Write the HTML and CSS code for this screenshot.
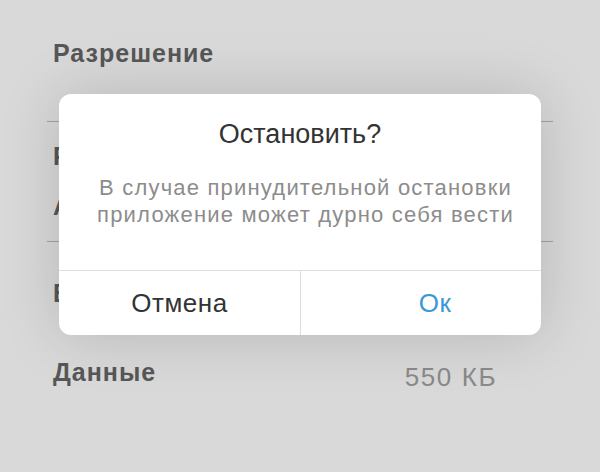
FILE: index.html
```html
<!DOCTYPE html>
<html lang="ru">
<head>
  <meta charset="UTF-8" />
  <meta name="viewport" content="width=device-width, initial-scale=1.0"/>
  <title>Остановить?</title>
  <link rel="stylesheet" href="styles.css">
</head>
<body>
  <div class="settings">
    <div class="row row-top">
      <span class="label">Разрешение</span>
    </div>

    <!-- these rows sit under the alert, only their first letters show -->
    <div class="group group-first">
      <div class="row">
        <span class="label">Расход</span>
      </div>
      <div class="row">
        <span class="label">А</span>
      </div>
    </div>

    <div class="group group-second">
      <div class="row row-tall">
        <span class="label">Всего</span>
      </div>
      <div class="row row-tall">
        <span class="label">Данные</span>
        <span class="value">550 КБ</span>
      </div>
    </div>
  </div>

  <!-- Alert dialog -->
  <div class="alert">
    <div class="alert-body">
      <h2 class="alert-title">Остановить?</h2>
      <p class="alert-text">В случае принудительной остановки<br>приложение может дурно себя вести</p>
    </div>
    <div class="alert-actions">
      <button type="button" class="alert-btn">Отмена</button>
      <button type="button" class="alert-btn alert-btn-ok">Ок</button>
    </div>
  </div>
</body>
</html>
```

FILE: styles.css
```css
:root {
  --bg: #d9d9d9;
  --text-dark: #575757;
  --text-muted: #8a8a8a;
  --line: #a3a3a3;
  --alert-bg: #ffffff;
  --alert-line: #dedede;
  --alert-title: #333333;
  --alert-text: #8c8c8c;
  --accent: #3a98d6;
  --radius: 12px;
}

* {
  box-sizing: border-box;
  margin: 0;
  padding: 0;
}

body {
  font-family: 'Liberation Sans', Arial, sans-serif;
  background: var(--bg);
  width: 600px;
  height: 472px;
  overflow: hidden;
  position: relative;
}

.settings {
  padding: 0 47px;
}

.row {
  display: flex;
  align-items: center;
  height: 50px;
  padding-left: 6px;
}

.row-top {
  margin-top: 29px;
  height: 49px;
  margin-bottom: 43px;
}

.row-tall {
  height: 79px;
}

.label {
  font-size: 25px;
  font-weight: 700;
  letter-spacing: 0.04em;
  color: var(--text-dark);
}

.value {
  margin-left: auto;
  margin-right: 56px;
  margin-top: 10px;
  font-size: 26px;
  letter-spacing: 0.06em;
  color: var(--text-muted);
}

.group {
  border-top: 1px solid var(--line);
}

.group-first {
  padding: 9px 0 10px;
}

.group-second {
  padding-top: 12px;
}

/* Alert */
.alert {
  position: absolute;
  left: 59px;
  top: 94px;
  width: 482px;
  height: 241px;
  background: var(--alert-bg);
  border-radius: var(--radius);
  box-shadow: 0 0 60px rgba(0, 0, 0, 0.16);
  display: flex;
  flex-direction: column;
  overflow: hidden;
}

.alert-body {
  height: 177px;
  border-bottom: 1px solid var(--alert-line);
  text-align: center;
  padding-top: 24px;
}

.alert-title {
  font-size: 27px;
  font-weight: 400;
  line-height: 32px;
  color: var(--alert-title);
}

.alert-text {
  margin-top: 24px;
  padding-left: 11px;
  font-size: 22px;
  line-height: 27px;
  letter-spacing: 1.2px;
  color: var(--alert-text);
}

.alert-actions {
  flex: 1;
  display: grid;
  grid-template-columns: 1fr 1fr;
}

.alert-btn {
  background: none;
  border: none;
  font-family: inherit;
  font-size: 26px;
  letter-spacing: 0.5px;
  color: var(--alert-title);
  cursor: pointer;
}

.alert-btn + .alert-btn {
  border-left: 1px solid var(--alert-line);
}

.alert-btn-ok {
  padding-left: 28px;
  color: var(--accent);
}
```
